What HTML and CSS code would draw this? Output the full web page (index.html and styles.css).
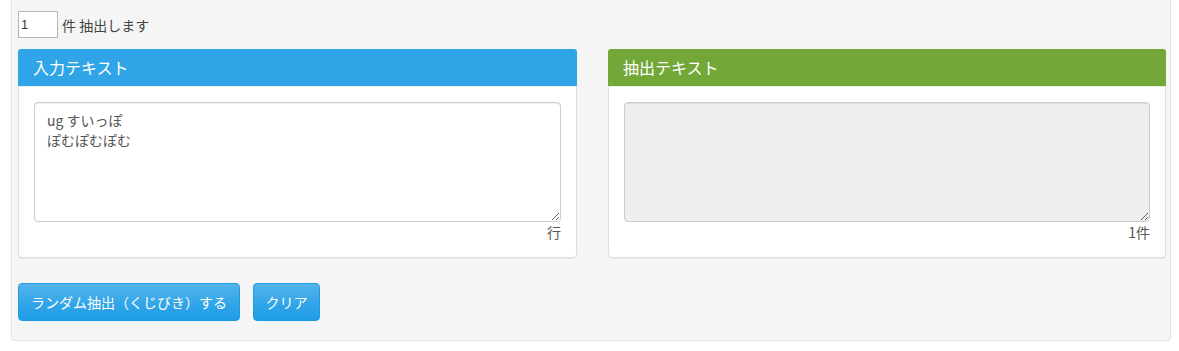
FILE: index.html
```html
<!DOCTYPE html>
<html lang="ja">
<head>
<meta charset="utf-8">
<title>ランダム抽出</title>
<link rel="stylesheet" href="styles.css">
</head>
<body>
<div class="well">
  <div class="count-row">
    <input class="count-input" type="text" value="1">
    <span class="count-label">件 抽出します</span>
  </div>
  <div class="panels">
    <div class="panel">
      <div class="panel-heading heading-blue">入力テキスト</div>
      <div class="panel-body">
        <textarea class="text-box" spellcheck="false">ug すいっぽ
ぽむぽむぽむ</textarea>
        <div class="meta">行</div>
      </div>
    </div>
    <div class="panel">
      <div class="panel-heading heading-green">抽出テキスト</div>
      <div class="panel-body">
        <textarea class="text-box readonly" readonly></textarea>
        <div class="meta">1件</div>
      </div>
    </div>
  </div>
  <div class="actions">
    <button class="btn btn-wide" type="button">ランダム抽出（くじびき）する</button>
    <button class="btn btn-narrow" type="button">クリア</button>
  </div>
</div>
</body>
</html>
```

FILE: styles.css
```css
* { box-sizing: border-box; }
html, body {
  margin: 0;
  padding: 0;
  background: #fff;
}
body {
  font-family: "Noto Sans CJK JP", "Noto Sans", "Liberation Sans", sans-serif;
  font-size: 14px;
  color: #555;
}
.well {
  margin: 0 8px 10px 11px;
  height: 341px;
  background: #f5f5f5;
  border: 1px solid #e3e3e3;
  border-top: none;
  border-radius: 0 0 4px 4px;
  padding: 11px 5px 0 6px;
}
.count-row {
  display: flex;
  align-items: center;
  height: 27px;
}
.count-input {
  width: 40px;
  height: 27px;
  border: 1px solid #b5b5b5;
  background: #fff;
  padding: 0 2px;
  font-family: "Liberation Sans", sans-serif;
  font-size: 13px;
  color: #333;
  margin: 0;
}
.count-label {
  margin-left: 4px;
  font-size: 14px;
  color: #444;
}
.panels {
  display: grid;
  grid-template-columns: 559px 558px;
  column-gap: 31px;
  margin-top: 11px;
}
.panel {
  background: #fff;
  border: 1px solid #ddd;
  border-radius: 4px;
  box-shadow: 0 1px 1px rgba(0,0,0,0.05);
}
.panel-heading {
  height: 38px;
  margin: -1px -1px 0 -1px;
  padding: 0 15px 1px;
  display: flex;
  align-items: center;
  color: #fff;
  font-size: 16px;
  border-radius: 3px 3px 0 0;
  border-bottom: 1px solid #e6eef3;
}
.heading-blue { background: #2fa4e7; }
.heading-green { background: #73a839; }
.panel-body {
  padding: 15px;
}
.text-box {
  display: block;
  width: 100%;
  height: 120px;
  margin: 0;
  padding: 7px 12px;
  border: 1px solid #ccc;
  border-radius: 4px;
  background: #fff;
  font-family: "Noto Sans CJK JP", "Noto Sans", sans-serif;
  font-size: 14px;
  line-height: 20px;
  color: #555;
  box-shadow: inset 0 1px 1px rgba(0,0,0,0.075);
  resize: vertical;
}
.text-box.readonly {
  background: #eee;
}
.meta {
  text-align: right;
  height: 20px;
  line-height: 20px;
  font-size: 14px;
  color: #555;
}
.actions {
  display: flex;
  gap: 13px;
  margin-top: 25px;
}
.btn {
  height: 38px;
  border: 1px solid #1d9ce5;
  border-radius: 4px;
  background: linear-gradient(#54b4eb, #2fa4e7 60%, #1d9ce5);
  color: #fff;
  font-family: "Noto Sans CJK JP", "Noto Sans", sans-serif;
  font-size: 14px;
  padding: 0;
  margin: 0;
  white-space: nowrap;
}
.btn-wide { width: 222px; }
.btn-narrow { width: 67px; }
```
